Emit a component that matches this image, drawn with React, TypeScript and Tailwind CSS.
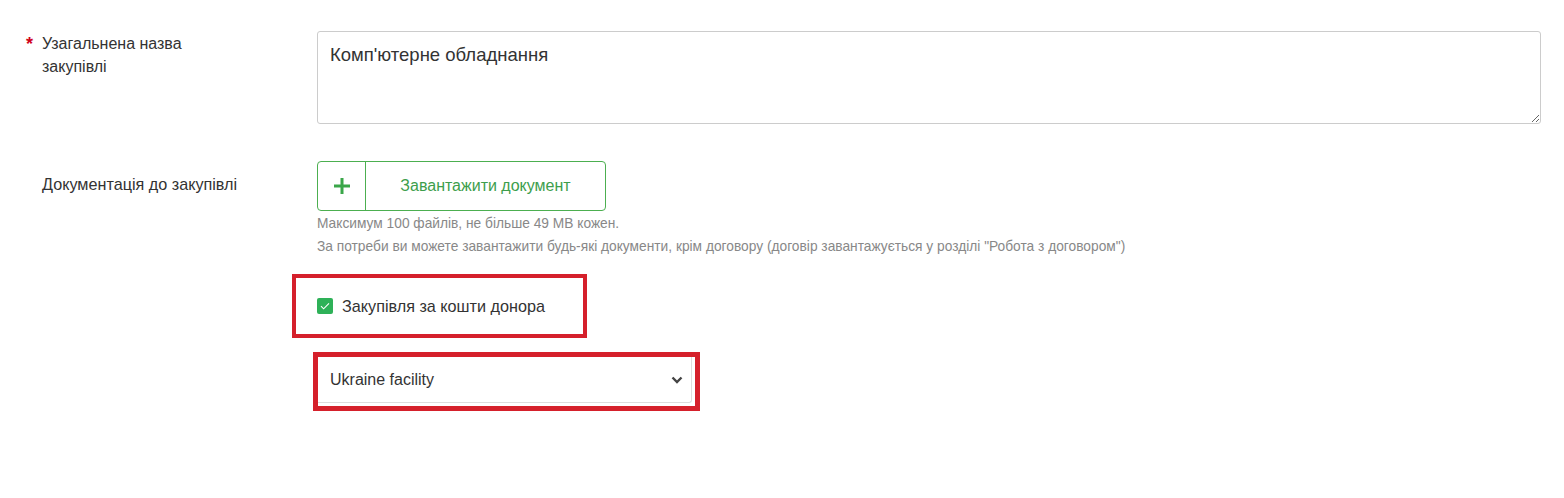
import React from 'react';

const FONT = { fontFamily: '"Liberation Sans", Arial, sans-serif' };

const App: React.FC = () => {
  return (
    <div className="min-h-[498px] bg-white pt-[31px] pr-[23px] text-[#333]" style={FONT}>
      {/* Назва закупівлі */}
      <div className="flex">
        <div className="w-[317px] shrink-0 pl-[26px] flex">
          <span className="w-[16px] text-[#d0021b] font-bold text-[18px] leading-[26px]">*</span>
          <label className="w-[200px] text-[16px] leading-[23px] pt-[1px]">Узагальнена назва закупівлі</label>
        </div>
        <div className="flex-1">
          <textarea
            defaultValue="Комп'ютерне обладнання"
            className="block w-full h-[93px] rounded-[3px] border border-[#ccc] px-3 pt-[12px] text-[18.5px] leading-[22px] text-[#333] outline-none"
            style={FONT}
          />
        </div>
      </div>

      {/* Документація */}
      <div className="flex mt-[37px]">
        <div className="w-[317px] shrink-0 pl-[42px] pt-[12px]">
          <label className="text-[16.2px] leading-[23px]">Документація до закупівлі</label>
        </div>
        <div className="flex-1">
          <button className="flex h-[50px] w-[289px] items-stretch rounded-[4px] border border-[#4caf50] bg-white">
            <span className="flex w-[48px] items-center justify-center border-r border-[#4caf50]">
              <svg width="18" height="18" viewBox="0 0 18 18">
                <path d="M9 1v16M1 9h16" stroke="#3aa649" strokeWidth="3" />
              </svg>
            </span>
            <span className="flex flex-1 items-center justify-center text-[16px] text-[#3d9e4c]">Завантажити документ</span>
          </button>
          <p className="mt-[4px] text-[13.75px] leading-[18px] text-[#888]">Максимум 100 файлів, не більше 49 MB кожен.</p>
          <p className="mt-[5px] text-[13.75px] leading-[18px] text-[#888]">
            За потреби ви можете завантажити будь-які документи, крім договору (договір завантажується у розділі "Робота з договором")
          </p>

          {/* Закупівля за кошти донора */}
          <div className="mt-[18px] -ml-[25px] flex h-[64px] w-[295px] items-center border-[4px] border-[#d5202b] pl-[21px]">
            <span className="flex h-[16px] w-[16px] items-center justify-center rounded-[2px] bg-[#2eb158]">
              <svg width="12" height="12" viewBox="0 0 12 12">
                <path d="M2 6.2l2.6 2.6L10 3.4" fill="none" stroke="#fff" strokeWidth="1.1" />
              </svg>
            </span>
            <span className="ml-[9px] text-[16.2px] leading-[20px]">Закупівля за кошти донора</span>
          </div>

          <div className="mt-[14px] -ml-[4px] w-[387px] border-[5px] border-[#d5202b] pr-[3px] pb-[3px]">
            <div className="flex h-[46px] items-center justify-between rounded-br-[3px] border-r border-b border-[#ddd] pl-[12px] pr-[8px]">
              <span className="text-[16px]">Ukraine facility</span>
              <svg width="12" height="8" viewBox="0 0 12 8">
                <path d="M1.5 1.5L6 6l4.5-4.5" fill="none" stroke="#444" strokeWidth="2.4" />
              </svg>
            </div>
          </div>
        </div>
      </div>
    </div>
  );
};

export default App;
